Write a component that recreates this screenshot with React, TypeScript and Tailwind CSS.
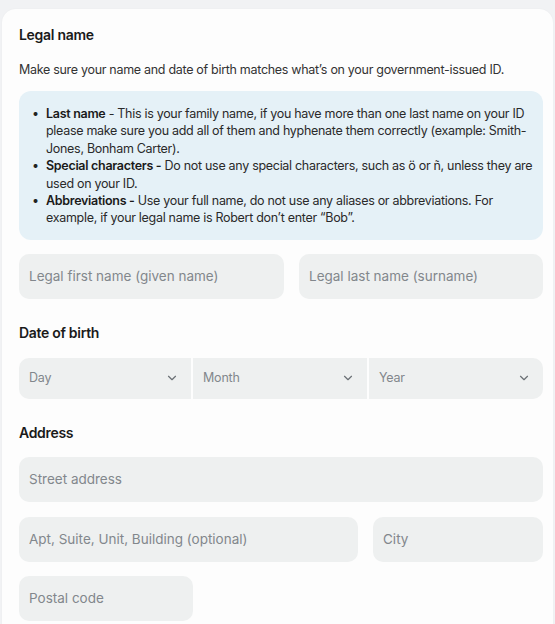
import { ChevronDown } from "lucide-react";

const NOTES = [
  {
    title: "Last name",
    body: " - This is your family name, if you have more than one last name on your ID please make sure you add all of them and hyphenate them correctly (example: Smith-Jones, Bonham Carter).",
  },
  {
    title: "Special characters -",
    body: " Do not use any special characters, such as ö or ñ, unless they are used on your ID.",
  },
  {
    title: "Abbreviations -",
    body: " Use your full name, do not use any aliases or abbreviations. For example, if your legal name is Robert don’t enter “Bob”.",
  },
];

function Field({ placeholder, className = "" }: { placeholder: string; className?: string }) {
  return (
    <input
      placeholder={placeholder}
      className={`h-[45px] rounded-[10px] bg-[#eef0f0] px-[10px] text-[13.5px] text-[#222] placeholder:text-[#82878c] outline-none ${className}`}
    />
  );
}

function Select({ label, className = "" }: { label: string; className?: string }) {
  return (
    <button
      className={`flex h-[41px] items-center justify-between bg-[#eef0f0] pl-[10px] pr-[12px] text-[12.5px] tracking-[-0.2px] text-[#82878c] ${className}`}
    >
      <span>{label}</span>
      <ChevronDown className="h-[14px] w-[14px] text-[#6b7075]" strokeWidth={2} />
    </button>
  );
}

export default function App() {
  return (
    <div className="min-h-[624px] w-[555px] overflow-hidden bg-[#f1f2f4] pt-[9px] font-['Inter',sans-serif]">
      <div className="ml-[2px] w-[551px] rounded-t-[14px] bg-[#fdfdfd] pb-[10px] pl-[17px] pr-[10px] pt-[16px] shadow-[0_0_2px_rgba(0,0,0,0.04)]">
        {/* Legal name */}
        <h2 className="text-[14px] font-semibold leading-[20px] tracking-[-0.3px] text-[#1a1a1a]">Legal name</h2>
        <p className="mt-[16px] text-[12.5px] leading-[18px] tracking-[-0.3px] text-[#333]">
          Make sure your name and date of birth matches what’s on your government-issued ID.
        </p>

        <ul className="mt-[12px] rounded-[12px] bg-[#e5f1f7] pb-[13px] pl-[13px] pr-[10px] pt-[14px] text-[12.5px] leading-[17.4px] tracking-[-0.3px] text-[#2a2a2a]">
          {NOTES.map((n) => (
            <li key={n.title} className="flex">
              <span className="w-[14px] shrink-0 text-[#222]">•</span>
              <span>
                <b className="font-semibold text-[#1a1a1a]">{n.title}</b>
                {n.body}
              </span>
            </li>
          ))}
        </ul>

        <div className="mt-[14px] flex gap-[15px]">
          <Field placeholder="Legal first name (given name)" className="w-[265px]" />
          <Field placeholder="Legal last name (surname)" className="w-[244px]" />
        </div>

        {/* Date of birth */}
        <h2 className="mt-[24px] text-[14px] font-semibold leading-[20px] tracking-[-0.3px] text-[#1a1a1a]">
          Date of birth
        </h2>
        <div className="mt-[15px] flex gap-[2px]">
          <Select label="Day" className="w-[172px] rounded-l-[10px]" />
          <Select label="Month" className="w-[174px]" />
          <Select label="Year" className="w-[174px] rounded-r-[10px]" />
        </div>

        {/* Address */}
        <h2 className="mt-[24px] text-[14px] font-semibold leading-[20px] tracking-[-0.3px] text-[#1a1a1a]">Address</h2>
        <div className="mt-[14px] flex flex-col">
          <Field placeholder="Street address" className="w-[524px]" />
          <div className="mt-[15px] flex gap-[15px]">
            <Field placeholder="Apt, Suite, Unit, Building (optional)" className="w-[339px]" />
            <Field placeholder="City" className="w-[170px]" />
          </div>
          <Field placeholder="Postal code" className="mt-[14px] w-[174px]" />
        </div>
      </div>
    </div>
  );
}
